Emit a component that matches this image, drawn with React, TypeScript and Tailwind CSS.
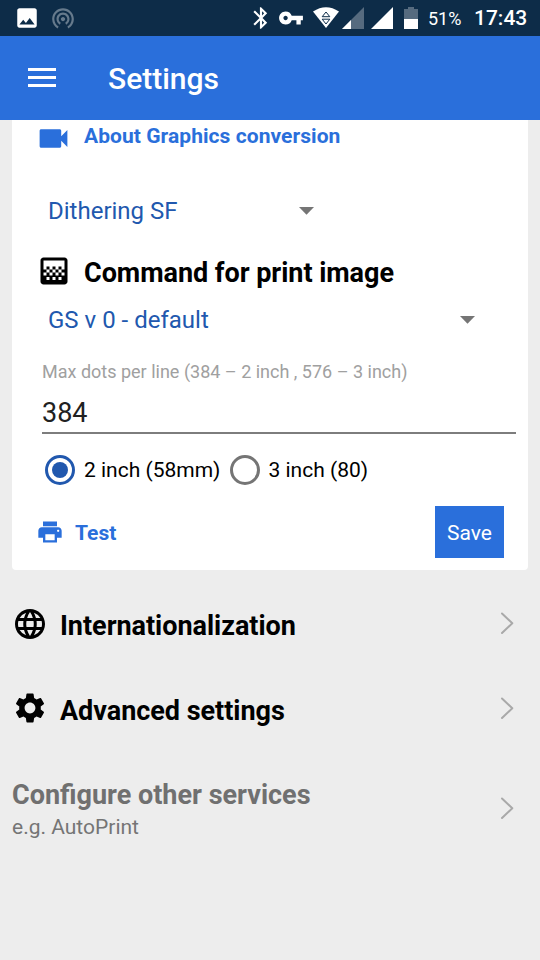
import type { ReactNode } from "react";
import {
  MdBluetooth,
  MdGradient,
  MdImage,
  MdLanguage,
  MdPrint,
  MdSettings,
  MdVideocam,
  MdVpnKey,
  MdWifiTethering,
} from "react-icons/md";

function WifiIcon() {
  return (
    <svg className="h-[22px] w-[26px] shrink-0" viewBox="0 0 26 22">
      <path d="M0 4.5Q13-4.2 26 4.5L13 21Z" fill="#fff" />
      <path
        d="M9.2 9.7h7.6L13 5ZM9.2 12.2h7.6L13 17Z"
        fill="none"
        stroke="#0d2c48"
        strokeWidth="1"
      />
    </svg>
  );
}

function SignalIcon({ weak = false }: { weak?: boolean }) {
  return (
    <svg className="h-[22px] w-[22px] shrink-0" viewBox="0 0 22 22">
      <path d="M0 22 22 0v22Z" fill={weak ? "#566b7f" : "#fff"} />
      {weak && <path d="M0 22 9 13v9Z" fill="#fff" />}
    </svg>
  );
}

function BatteryIcon() {
  return (
    <svg className="h-[22px] w-[14px] shrink-0" viewBox="0 0 14 22">
      <path d="M4 0h6v2h4v10H0V2h4Z" fill="#566b7f" />
      <path d="M0 12h14v10H0Z" fill="#fff" />
    </svg>
  );
}

function StatusBar() {
  return (
    <div className="flex h-9 items-center bg-[#0d2c48] text-white">
      <MdImage className="ml-[14px] size-[26px] shrink-0" />
      <MdWifiTethering className="ml-[10px] size-[26px] shrink-0 text-[#667a8c]" />
      <MdBluetooth className="ml-[172px] size-[26px] shrink-0" />
      <MdVpnKey className="ml-[4px] size-[26px] shrink-0" />
      <div className="ml-[9px] flex">
        <WifiIcon />
      </div>
      <div className="ml-[3px] flex">
        <SignalIcon weak />
      </div>
      <div className="ml-[7px] flex">
        <SignalIcon />
      </div>
      <div className="ml-[11px] flex">
        <BatteryIcon />
      </div>
      <span className="ml-[10px] w-[46px] text-[18px] whitespace-nowrap">51%</span>
      <span className="pt-[2px] text-[21px] font-medium whitespace-nowrap">17:43</span>
    </div>
  );
}

function Header() {
  return (
    <header className="flex h-[84px] items-center bg-[#2a6fdb] text-white">
      <button className="-mt-[2px] ml-7 flex w-7 flex-col gap-[5px]" aria-label="Menu">
        <span className="h-[3px] w-full bg-white" />
        <span className="h-[3px] w-full bg-white" />
        <span className="h-[3px] w-full bg-white" />
      </button>
      <h1 className="ml-[52px] pt-[2px] text-[30px] leading-9 font-medium">Settings</h1>
    </header>
  );
}

function Caret() {
  return (
    <svg className="h-[8px] w-[15px] shrink-0" viewBox="0 0 15 8">
      <path d="M0 0h15L7.5 7.7Z" fill="#757575" />
    </svg>
  );
}

function Chevron() {
  return (
    <svg className="-mt-[3px] mr-[26px] h-[24px] w-[14px] shrink-0" viewBox="0 0 14 24">
      <path
        d="M2 2.5 12.3 12.2 2 22"
        fill="none"
        stroke="#a9a9a9"
        strokeWidth="2"
        strokeLinecap="round"
        strokeLinejoin="round"
      />
    </svg>
  );
}

function Radio({ checked = false }: { checked?: boolean }) {
  return (
    <span
      className={
        checked
          ? "-mt-[2px] flex size-[30px] shrink-0 items-center justify-center rounded-full border-[3px] border-[#2158ae]"
          : "-mt-[2px] flex size-[30px] shrink-0 items-center justify-center rounded-full border-[3px] border-[#757575]"
      }
    >
      {checked && <span className="size-[16px] rounded-full bg-[#2158ae]" />}
    </span>
  );
}

function SettingsRow({ icon, label }: { icon: ReactNode; label: string }) {
  return (
    <div className="flex h-[85px] items-center pl-3">
      {icon}
      <span className="ml-3 flex-1 pt-[3px] text-[27px] leading-8 font-bold tracking-[-0.03px] text-black">
        {label}
      </span>
      <Chevron />
    </div>
  );
}

export default function App() {
  return (
    <div className="h-[960px] w-[540px] overflow-hidden bg-[#ededed] font-['Roboto',sans-serif]">
      <StatusBar />
      <Header />
      <section className="mx-3 h-[450px] rounded-b-[4px] bg-white">
        <div className="flex h-[36px] items-center pl-[23px] text-[#2a6fdb]">
          <MdVideocam className="mt-px size-[37px] shrink-0" />
          <span className="-mt-[3px] ml-3 text-[21px] font-bold tracking-[0.06px]">
            About Graphics conversion
          </span>
        </div>
        <div className="mt-[31px] flex h-12 items-center pl-9 text-[24px] text-[#2158ae]">
          <span className="w-[251px]">Dithering SF</span>
          <Caret />
        </div>
        <div className="mt-[17px] flex h-[38px] items-center pl-6">
          <MdGradient className="size-9 shrink-0" />
          <h2 className="ml-3 pt-[4px] text-[27px] leading-8 font-bold tracking-[-0.04px] text-black">
            Command for print image
          </h2>
        </div>
        <div className="mt-[6px] flex h-12 items-center pl-9 text-[24px] text-[#2158ae]">
          <span className="w-[412px]">GS v 0 - default</span>
          <Caret />
        </div>
        <div className="mt-[16px] mr-3 ml-[30px] border-b-2 border-[#7d7d7d]">
          <div className="text-[18px] leading-[24px] text-[#a0a0a0]">
            Max dots per line (384 – 2 inch , 576 – 3 inch)
          </div>
          <div className="h-[48px] pt-[12px] text-[27px] leading-[34px] text-[#212121]">384</div>
        </div>
        <div className="mt-[21px] flex h-[32px] items-center pl-[33px] text-[21px] text-black">
          <Radio checked />
          <span className="ml-[9px] w-[145.5px]">2 inch (58mm)</span>
          <Radio />
          <span className="ml-[9px]">3 inch (80)</span>
        </div>
        <div className="mt-[19px] flex h-[52px] items-center pl-[24px]">
          <MdPrint className="-mt-px size-[28px] shrink-0 text-[#2a6fdb]" />
          <span className="ml-[11px] flex-1 pt-[3px] text-[21px] font-bold text-[#2a6fdb]">Test</span>
          <button className="mr-6 h-[52px] w-[69px] bg-[#2a6fdb] pt-[3px] text-[21px] text-white">
            Save
          </button>
        </div>
      </section>
      <div className="pt-[12px]">
        <SettingsRow
          icon={<MdLanguage className="-mt-[2px] size-9 shrink-0" />}
          label="Internationalization"
        />
        <SettingsRow
          icon={<MdSettings className="-mt-[3px] size-9 shrink-0" />}
          label="Advanced settings"
        />
      </div>
      <div className="mt-[25px] flex items-center pl-3">
        <div className="flex-1">
          <div className="text-[27px] leading-9 font-bold text-[#707070]">
            Configure other services
          </div>
          <div className="text-[21px] leading-[28px] text-[#757575]">e.g. AutoPrint</div>
        </div>
        <Chevron />
      </div>
    </div>
  );
}
